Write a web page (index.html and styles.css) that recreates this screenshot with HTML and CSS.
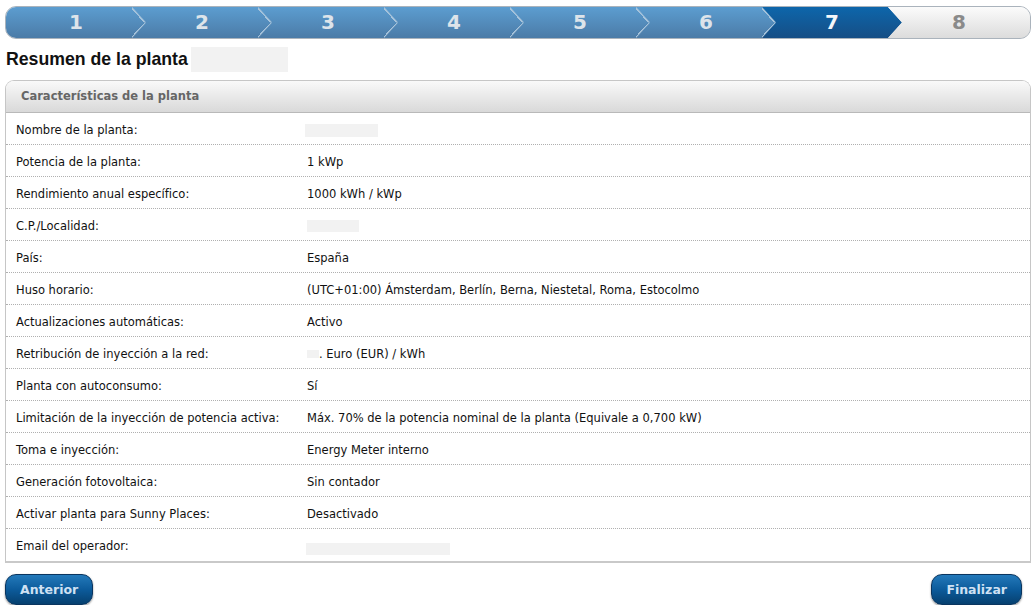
FILE: index.html
```html
<!DOCTYPE html>
<html lang="es">
<head>
    <meta charset="UTF-8">
    <title>Resumen de la planta</title>
    <link rel="stylesheet" href="styles.css">
</head>
<body>
    <ol class="steps">
        <li class="step step-done">1</li>
        <li class="step step-done">2</li>
        <li class="step step-done">3</li>
        <li class="step step-done">4</li>
        <li class="step step-done">5</li>
        <li class="step step-done">6</li>
        <li class="step step-current">7</li>
        <li class="step step-todo">8</li>
    </ol>

    <h1 class="page-title">Resumen de la planta <span class="blank blank-title"></span></h1>

    <div class="panel">
        <div class="panel-head">Características de la planta</div>
        <div class="row"><span>Nombre de la planta:</span><span><span class="blank blank-name"></span></span></div>
        <div class="row"><span>Potencia de la planta:</span><span>1 kWp</span></div>
        <div class="row"><span>Rendimiento anual específico:</span><span>1000 kWh / kWp</span></div>
        <div class="row"><span>C.P./Localidad:</span><span><span class="blank blank-city"></span></span></div>
        <div class="row"><span>País:</span><span>España</span></div>
        <div class="row"><span>Huso horario:</span><span>(UTC+01:00) Ámsterdam, Berlín, Berna, Niestetal, Roma, Estocolmo</span></div>
        <div class="row"><span>Actualizaciones automáticas:</span><span>Activo</span></div>
        <div class="row"><span>Retribución de inyección a la red:</span><span><span class="blank blank-price"></span>. Euro (EUR) / kWh</span></div>
        <div class="row"><span>Planta con autoconsumo:</span><span>Sí</span></div>
        <div class="row"><span>Limitación de la inyección de potencia activa:</span><span>Máx. 70% de la potencia nominal de la planta (Equivale a 0,700 kW)</span></div>
        <div class="row"><span>Toma e inyección:</span><span>Energy Meter interno</span></div>
        <div class="row"><span>Generación fotovoltaica:</span><span>Sin contador</span></div>
        <div class="row"><span>Activar planta para Sunny Places:</span><span>Desactivado</span></div>
        <div class="row"><span>Email del operador:</span><span><span class="blank blank-mail"></span></span></div>
    </div>

    <div class="actions">
        <button type="button" class="btn">Anterior</button>
        <button type="button" class="btn">Finalizar</button>
    </div>
</body>
</html>
```

FILE: styles.css
```css
* {
    margin: 0;
    padding: 0;
    box-sizing: border-box;
}

body {
    font-family: 'DejaVu Sans', Verdana, sans-serif;
    font-size: 11.5px;
    color: #111;
    background: white;
    padding: 6px 5px 0 5px;
}

/* wizard steps */
.steps {
    display: flex;
    list-style: none;
    height: 33px;
    border: 1px solid #aab3bc;
    border-radius: 11px;
    overflow: hidden;
    background: linear-gradient(#fbfbfb, #dcdcdc);
}

.step {
    flex: none;
    width: 140px;
    margin-left: -14px;
    text-align: center;
    line-height: 31px;
    font-size: 20px;
    font-weight: bold;
    clip-path: polygon(0 0, calc(100% - 14px) 0, 100% 50%, calc(100% - 14px) 100%, 0 100%, 14px 50%);
}

.step:first-child {
    margin-left: 0;
    clip-path: polygon(0 0, calc(100% - 14px) 0, 100% 50%, calc(100% - 14px) 100%, 0 100%);
}

.step-done {
    color: #dde4ea;
    background:
        linear-gradient(to top right, transparent calc(50% - 1.5px), #a9c5dc calc(50% - 1.5px), #a9c5dc 50%, transparent 50%) right top / 14px 50% no-repeat,
        linear-gradient(to bottom right, transparent calc(50% - 1.5px), #a9c5dc calc(50% - 1.5px), #a9c5dc 50%, transparent 50%) right bottom / 14px 50% no-repeat,
        linear-gradient(#5c9dd0, #4b7ba7);
}

.step-current {
    color: #f4f7fa;
    background: linear-gradient(#0d66ab, #164e85);
}

.step-todo {
    flex: 1;
    color: #8a8a8a;
    background: linear-gradient(#fbfbfb, #dcdcdc);
    clip-path: polygon(0 0, 100% 0, 100% 100%, 0 100%, 14px 50%);
}

/* title */
.page-title {
    font-family: 'Liberation Sans', Arial, sans-serif;
    font-size: 17.7px;
    line-height: 25px;
    margin: 8px 0 8px 1px;
    color: #111;
}

.blank {
    display: inline-block;
    background: #f2f2f2;
    vertical-align: middle;
}

.blank-title {
    width: 97px;
    height: 25px;
    margin-left: -2px;
    vertical-align: top;
}

.blank-name {
    width: 73px;
    height: 13px;
    margin-left: -2px;
}

.blank-city {
    width: 52px;
    height: 12px;
}

.blank-price {
    width: 12px;
    height: 8px;
    vertical-align: baseline;
}

.blank-mail {
    width: 144px;
    height: 12px;
    margin-left: -1px;
    margin-top: 6px;
}

/* summary panel */
.panel {
    border: 1px solid #c6c6c6;
    border-bottom: 2px solid #c9c9c9;
    border-radius: 9px 9px 0 0;
    overflow: hidden;
}

.panel-head {
    height: 32px;
    line-height: 31px;
    padding-left: 15px;
    font-weight: bold;
    color: #666;
    background: linear-gradient(#f9f9f9, #d9d9d9);
    border-bottom: 1px solid #b9b9b9;
}

.row {
    display: grid;
    grid-template-columns: 291px 1fr;
    align-items: center;
    height: 32px;
    padding: 2px 0 0 10px;
    border-bottom: 1px dotted #b0b0b0;
}

.row:last-child {
    border-bottom: none;
}

/* buttons */
.actions {
    display: flex;
    justify-content: space-between;
    margin-top: 11px;
    padding-right: 9px;
}

.btn {
    height: 31px;
    padding: 0 14px;
    font-family: 'DejaVu Sans', Verdana, sans-serif;
    font-size: 12.5px;
    font-weight: bold;
    color: #cfe1f3;
    border: 1px solid #0a355f;
    border-radius: 11px;
    background: linear-gradient(#2379ba, #0c5b9b 50%, #06406f);
    box-shadow: 0 1px 2px rgba(0,0,0,0.45);
    cursor: pointer;
}
```
